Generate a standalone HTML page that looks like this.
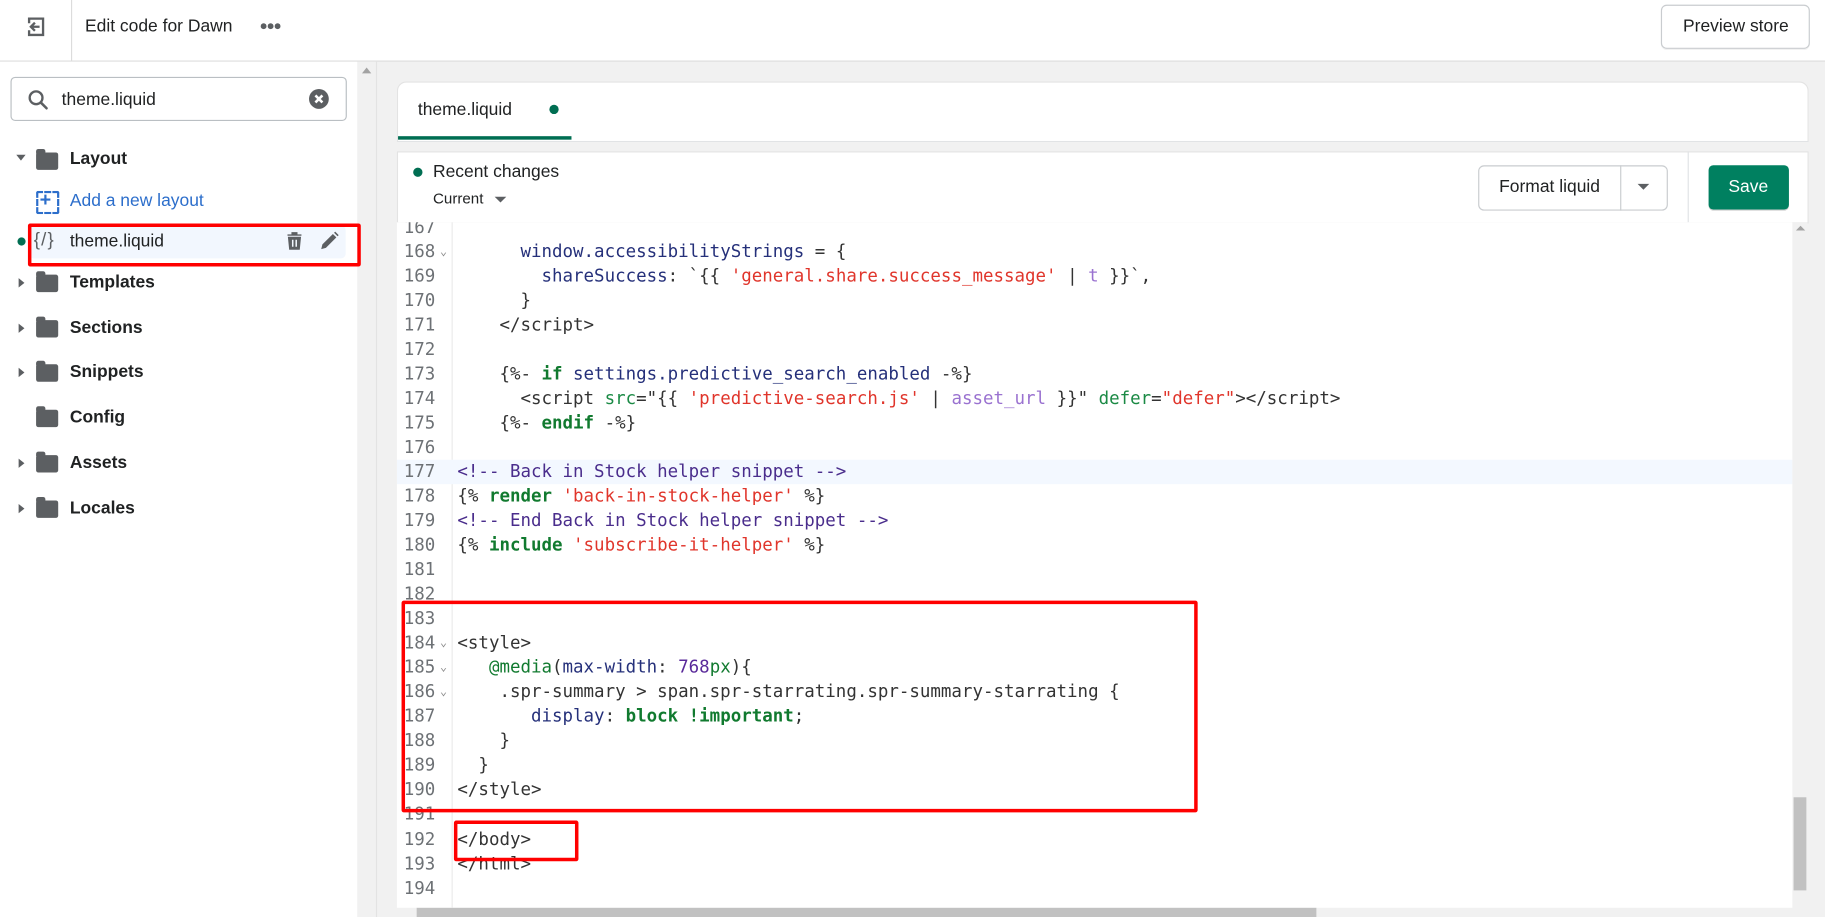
<!DOCTYPE html>
<html><head><meta charset="utf-8"><style>
html,body{margin:0;padding:0;width:1825px;height:917px;overflow:hidden;background:#fff}
#w{position:absolute;left:0;top:0;width:1568px;height:788px;transform:scale(1.16390);transform-origin:0 0;font-family:"Liberation Sans",sans-serif;color:#202223;background:#f1f1f1;overflow:hidden}
.a{position:absolute}
.top{left:0;top:0;width:1568px;height:52px;background:#fff;border-bottom:1px solid #dcdcdc}
.side{left:0;top:53px;width:307px;height:735px;background:#fff}
.row{position:absolute;left:60px;font-size:15px;font-weight:bold;color:#202223}
.fold{position:absolute;left:31px;width:19px;height:15px;background:#5c5f62;border-radius:2px}
.fold:before{content:"";position:absolute;left:0;top:-3px;width:8px;height:4px;background:#5c5f62;border-radius:2px 2px 0 0}
.car{position:absolute;left:16px;width:0;height:0;border-top:4px solid transparent;border-bottom:4px solid transparent;border-left:5px solid #5c5f62}
.code{position:absolute;left:341px;top:191px;width:1199px;height:589px;background:#fff;overflow:hidden;font-family:"DejaVu Sans Mono",monospace;font-size:15px}
.ln{position:absolute;left:0;width:33px;text-align:right;color:#6d7175;height:21.04px;line-height:21.04px}
.tx{position:absolute;left:52px;white-space:pre;height:21.04px;line-height:21.04px;color:#333}
.fd{position:absolute;left:37px;font-size:10px;color:#888}
.n{color:#25307a}.c{color:#4a2d8c}.s{color:#e0352b}.k{color:#117a2f;font-weight:bold}.at{color:#1b8a45}.f{color:#9a72d0}.p{color:#5a2a9a}
.red{position:absolute;border:3px solid #f00;border-radius:2px}
.dot{position:absolute;width:5px;height:5px;border-radius:50%;background:#5c5f62;top:20px}
</style></head><body><div id="w">
<div class="a top">
 <svg class="a" style="left:21px;top:13px" width="20" height="20" viewBox="0 0 20 20"><path d="M4 7V3h12v14H4v-4" fill="none" stroke="#5c5f62" stroke-width="2"/><path d="M13 10H6M9 6.5 5.5 10 9 13.5" fill="none" stroke="#5c5f62" stroke-width="2"/></svg>
 <div class="a" style="left:61px;top:0;width:1px;height:52px;background:#dcdcdc"></div>
 <div class="a" style="left:73px;top:14px;font-size:15px">Edit code for Dawn</div>
 <div class="dot" style="left:224px"></div><div class="dot" style="left:230px"></div><div class="dot" style="left:236px"></div>
 <div class="a" style="left:1427px;top:4px;width:126px;height:36px;border:1px solid #c9cccf;border-radius:5px;box-shadow:0 1px 0 rgba(0,0,0,.05)"></div>
 <div class="a" style="left:1446px;top:14px;font-size:15px">Preview store</div>
</div>
<div class="a side">
 <div class="a" style="left:9px;top:13px;width:287px;height:36px;border:1px solid #babfc3;border-radius:4px"></div>
 <svg class="a" style="left:23px;top:23px" width="20" height="20" viewBox="0 0 20 20"><circle cx="8" cy="8" r="5.5" fill="none" stroke="#5c5f62" stroke-width="2"/><path d="M12 12l5 5" stroke="#5c5f62" stroke-width="2.2" stroke-linecap="round"/></svg>
 <div class="a" style="left:53px;top:24px;font-size:15px">theme.liquid</div>
 <svg class="a" style="left:265px;top:23px" width="18" height="18" viewBox="0 0 18 18"><circle cx="9" cy="9" r="8.5" fill="#5c5f62"/><path d="M6 6l6 6M12 6l-6 6" stroke="#fff" stroke-width="2.2"/></svg>
 <div class="car" style="left:14px;top:80px;border-left:4px solid transparent;border-right:4px solid transparent;border-top:5px solid #5c5f62;border-bottom:0"></div>
 <div class="fold" style="top:78px"></div><div class="row" style="top:75px">Layout</div>
 <div class="a" style="left:31px;top:111px;width:16px;height:16px;border:2px dashed #2c6ecb;border-radius:2px"></div>
 <div class="a" style="left:34px;top:109px;font-size:17px;font-weight:bold;color:#2c6ecb">+</div>
 <div class="a" style="left:60px;top:111px;font-size:15px;color:#2c6ecb">Add a new layout</div>
 <div class="a" style="left:25px;top:141px;width:272px;height:28px;background:#f2f7fe;border-radius:4px"></div>
 <div class="a" style="left:15px;top:151px;width:7px;height:7px;border-radius:50%;background:#006e52"></div>
 <div class="a" style="left:29px;top:145px;font-size:16px;color:#5c5f62;letter-spacing:1px">{/}</div>
 <div class="a" style="left:60px;top:146px;font-size:15px">theme.liquid</div>
 <svg class="a" style="left:244px;top:145px" width="18" height="18" viewBox="0 0 18 18"><path d="M3 4h12M7 4V2h4v2M4 6h10l-1 10H5z" fill="#5c5f62" stroke="#5c5f62" stroke-width="1.2"/><path d="M7.5 8v6M10.5 8v6" stroke="#f2f7fe" stroke-width="1.3"/></svg>
 <svg class="a" style="left:274px;top:145px" width="18" height="18" viewBox="0 0 18 18"><path d="M2 16l1-4L12 3l3 3-9 9z" fill="#5c5f62"/><path d="M13 2l1-1 3 3-1 1z" fill="#5c5f62"/></svg>
 <div class="car" style="top:186px"></div><div class="fold" style="top:183px"></div><div class="row" style="top:181px">Templates</div>
 <div class="car" style="top:225px"></div><div class="fold" style="top:222px"></div><div class="row" style="top:220px">Sections</div>
 <div class="car" style="top:263px"></div><div class="fold" style="top:260px"></div><div class="row" style="top:258px">Snippets</div>
 <div class="fold" style="top:299px"></div><div class="row" style="top:297px">Config</div>
 <div class="car" style="top:341px"></div><div class="fold" style="top:338px"></div><div class="row" style="top:336px">Assets</div>
 <div class="car" style="top:380px"></div><div class="fold" style="top:377px"></div><div class="row" style="top:375px">Locales</div>
</div>
<div class="a" style="left:307px;top:53px;width:16px;height:735px;background:#f1f1f1;border-right:1px solid #e3e3e3"></div>
<div class="a" style="left:311px;top:58px;border-left:4px solid transparent;border-right:4px solid transparent;border-bottom:5px solid #a3a3a3"></div>
<div class="red" style="left:24px;top:192px;width:280px;height:31px"></div>

<div class="a" style="left:341px;top:70px;width:1211px;height:50px;background:#fff;border:1px solid #e3e3e3;border-bottom:1px solid #e1e3e5;border-radius:8px 8px 0 0"></div>
<div class="a" style="left:359px;top:86px;font-size:15px">theme.liquid</div>
<div class="a" style="left:472px;top:90px;width:8px;height:8px;border-radius:50%;background:#006e52"></div>
<div class="a" style="left:342px;top:117px;width:149px;height:3px;background:#006e52"></div>

<div class="a" style="left:341px;top:130px;width:1211px;height:60px;background:#fff;border:1px solid #e3e3e3"></div>
<div class="a" style="left:355px;top:144px;width:8px;height:8px;border-radius:50%;background:#006e52"></div>
<div class="a" style="left:372px;top:139px;font-size:15px">Recent changes</div>
<div class="a" style="left:372px;top:163px;font-size:13px">Current</div>
<div class="a" style="left:425px;top:169px;border-left:5px solid transparent;border-right:5px solid transparent;border-top:5px solid #5c5f62"></div>
<div class="a" style="left:1270px;top:142px;width:161px;height:37px;border:1px solid #c9cccf;border-radius:5px;background:#fff"></div>
<div class="a" style="left:1392px;top:142px;width:1px;height:39px;background:#c9cccf"></div>
<div class="a" style="left:1288px;top:152px;font-size:15px">Format liquid</div>
<div class="a" style="left:1407px;top:158px;border-left:5px solid transparent;border-right:5px solid transparent;border-top:5px solid #5c5f62"></div>
<div class="a" style="left:1450px;top:130px;width:1px;height:61px;background:#e1e3e5"></div>
<div class="a" style="left:1468px;top:142px;width:69px;height:38px;background:#008060;border-radius:4px;box-shadow:0 1px 0 rgba(0,0,0,.2)"></div>
<div class="a" style="left:1485px;top:152px;font-size:15px;color:#fff">Save</div>

<div class="code">
 <div class="a" style="left:47px;top:0;width:1px;height:589px;background:#ebebeb"></div>
 <div class="a" style="left:0;top:204px;width:1199px;height:21px;background:#f3f8ff"></div>
 <div id="L"></div>
</div>
<div class="a" style="left:1540px;top:191px;width:13px;height:597px;background:#f1f1f1"></div>
<div class="a" style="left:1541px;top:685px;width:11px;height:80px;background:#c1c1c1"></div>
<div class="a" style="left:1543px;top:194px;border-left:4px solid transparent;border-right:4px solid transparent;border-bottom:4px solid #a3a3a3"></div>
<div class="a" style="left:341px;top:780px;width:1199px;height:8px;background:#f1f1f1"></div>
<div class="a" style="left:358px;top:780px;width:773px;height:8px;background:#c1c1c1"></div>
<div class="red" style="left:345px;top:516px;width:678px;height:176px"></div>
<div class="red" style="left:390px;top:705px;width:101px;height:29px"></div>
</div>
<script>
var lines=[
[167,''],
[168,'      <span class="n">window.accessibilityStrings</span> = {',1],
[169,'        <span class="n">shareSuccess</span>: `{{ <span class="s">\'general.share.success_message\'</span> | <span class="f">t</span> }}`,'],
[170,'      }'],
[171,'    &lt;/script&gt;'],
[172,''],
[173,'    {%- <span class="k">if</span> <span class="n">settings.predictive_search_enabled</span> -%}'],
[174,'      &lt;script <span class="at">src</span>="{{ <span class="s">\'predictive-search.js\'</span> | <span class="f">asset_url</span> }}" <span class="at">defer</span>=<span class="s">"defer"</span>&gt;&lt;/script&gt;'],
[175,'    {%- <span class="k">endif</span> -%}'],
[176,''],
[177,'<span class="c">&lt;!-- Back in Stock helper snippet --&gt;</span>'],
[178,'{% <span class="k">render</span> <span class="s">\'back-in-stock-helper\'</span> %}'],
[179,'<span class="c">&lt;!-- End Back in Stock helper snippet --&gt;</span>'],
[180,'{% <span class="k">include</span> <span class="s">\'subscribe-it-helper\'</span> %}'],
[181,''],[182,''],[183,''],
[184,'&lt;style&gt;',1],
[185,'   <span class="k" style="font-weight:normal">@media</span>(<span class="n">max-width</span>: <span class="p">768</span><span class="k" style="font-weight:normal">px</span>){',1],
[186,'    .spr-summary &gt; span.spr-starrating.spr-summary-starrating {',1],
[187,'       <span class="n">display</span>: <span class="k">block !important</span>;'],
[188,'    }'],[189,'  }'],[190,'&lt;/style&gt;'],[191,''],[192,'&lt;/body&gt;'],[193,'&lt;/html&gt;'],[194,'']];
var h='';lines.forEach(function(l,i){var t=(-6.5+i*21.04).toFixed(2);
h+='<div class="ln" style="top:'+t+'px">'+l[0]+'</div>';
if(l[2])h+='<div class="fd" style="top:'+(+t+5)+'px">&#8964;</div>';
h+='<div class="tx" style="top:'+t+'px">'+l[1]+'</div>';});
document.getElementById('L').innerHTML=h;
</script>
</body></html>
